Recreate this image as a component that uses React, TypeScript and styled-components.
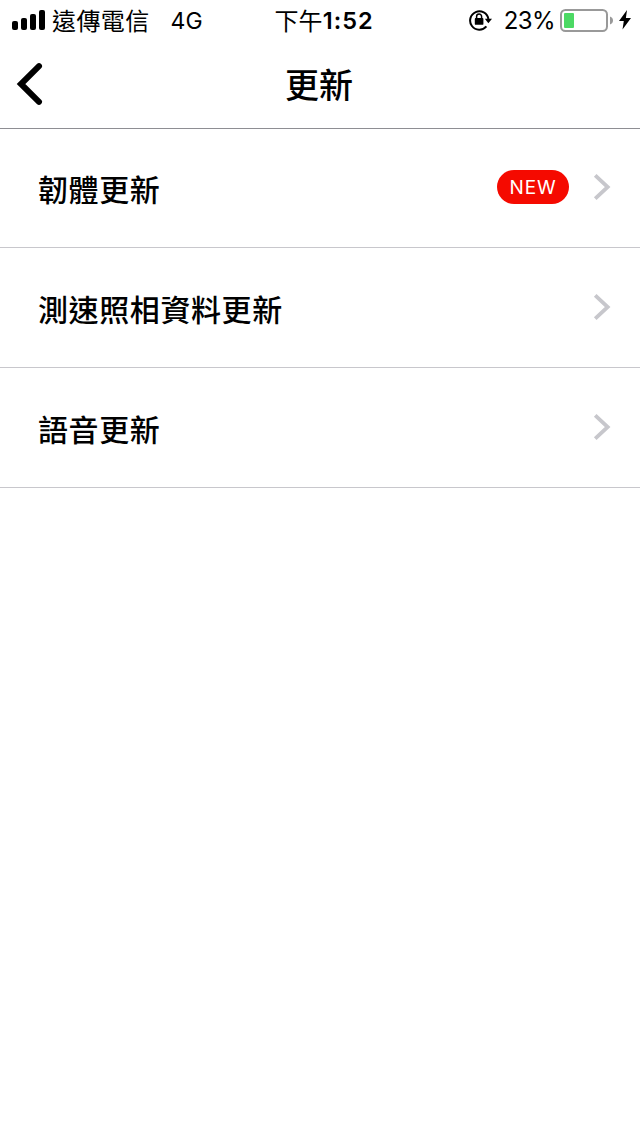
import React from "react";
import styled, { createGlobalStyle } from "styled-components";

const GlobalStyle = createGlobalStyle`
  * { box-sizing: border-box; }
  body {
    margin: 0;
    background: #fff;
    color: #000;
    font-family: Inter, "Noto Sans CJK TC", sans-serif;
  }
`;

const Screen = styled.main`
  min-height: 1136px;
  background: #fff;
`;

const StatusBar = styled.div`
  display: grid;
  grid-template: 40px / 1fr 100px 1fr;
  height: 40px;
  padding: 0 9px 0 12px;
  font-size: 24px;
  line-height: 38px;
  white-space: nowrap;
`;

const StatusGroup = styled.div<{ $end?: boolean }>`
  display: flex;
  align-items: center;
  justify-content: ${(p) => (p.$end ? "flex-end" : "flex-start")};
  svg { flex: none; }
`;

const Carrier = styled.span`
  margin-left: 6px;
  font-family: "Noto Sans CJK TC", sans-serif;
  font-weight: 400;
  letter-spacing: 0.4px;
`;

const Network = styled.span`
  margin-left: 21px;
  padding-top: 2px;
  font-size: 23px;
`;

const Clock = styled.div`
  display: flex;
  justify-content: center;
  padding: 1px 0 0 5px;
`;

const Period = styled.span`
  font-family: "Noto Sans CJK TC", sans-serif;
  font-weight: 400;
  letter-spacing: 0.2px;
`;

const Time = styled.span`
  padding-top: 1px;
  font-size: 23.5px;
  font-weight: 600;
  letter-spacing: 1px;
`;

const Percent = styled.span`
  margin: 0 5px 0 11px;
  padding-top: 2px;
  font-size: 24px;
  letter-spacing: -0.6px;
`;

const Header = styled.header`
  display: grid;
  grid-template-columns: 60px 1fr 62px;
  align-items: center;
  height: 89px;
  border-bottom: 1px solid #8e8e93;
`;

const BackButton = styled.button`
  display: flex;
  padding: 0 0 0 16px;
  border: 0;
  background: none;
`;

const Title = styled.h1`
  margin: 0;
  font: 500 34px/50px "Noto Sans CJK TC", sans-serif;
  text-align: center;
`;

const List = styled.ul`
  margin: 0;
  padding: 0;
  list-style: none;
`;

const Row = styled.li`
  display: flex;
  align-items: center;
  height: 120px;
  padding: 0 29px 2px 38px;
  border-bottom: 1px solid #c8c7cc;
  &:first-child { height: 119px; }
`;

const Label = styled.span`
  flex: 1;
  padding-top: 2px;
  font: 500 30px/44px "Noto Sans CJK TC", sans-serif;
  letter-spacing: 0.6px;
`;

const Badge = styled.span`
  width: 72px;
  height: 34px;
  margin-right: 24px;
  border-radius: 17px;
  background: #f50a00;
  color: #fff;
  font-size: 19px;
  font-weight: 400;
  line-height: 35px;
  letter-spacing: 0.8px;
  text-align: center;
`;

const SignalIcon = () => (
  <svg width="34" height="20" viewBox="0 0 34 20">
    <rect x="0" y="11" width="6" height="9" rx="2" />
    <rect x="9" y="8" width="6" height="12" rx="2" />
    <rect x="18" y="4" width="6" height="16" rx="2" />
    <rect x="27" y="0" width="6" height="20" rx="2" />
  </svg>
);

const LockIcon = () => (
  <svg width="24" height="22" viewBox="0 0 24 22">
    <path d="M17.400 17.400A9.200 9.200 0 1 1 19.400 10" fill="none" stroke="#000" strokeWidth="2" />
    <path d="M15.800 9.800h7.200l-3.600 4.400z" />
    <rect x="5.800" y="9" width="8.600" height="6.800" rx="0.900" />
    <path d="M7.600 9.500V7.600a2.500 2.500 0 0 1 5 0v1.900" fill="none" stroke="#000" strokeWidth="1.500" />
  </svg>
);

const BatteryIcon = () => (
  <svg width="54" height="24" viewBox="0 0 54 24">
    <rect x="1" y="2" width="46" height="21" rx="4.500" fill="none" stroke="#999" strokeWidth="2" />
    <rect x="4" y="5" width="10" height="15" rx="1" fill="#4cd964" />
    <path d="M50 8.500c4 1.300 4 6.700 0 8z" fill="#999" />
  </svg>
);

const BoltIcon = styled.svg`
  margin-left: 5px;
`;

const Chevron = () => (
  <svg width="18" height="28" viewBox="0 0 18 28">
    <path d="M2.200 2.300L14.700 14 2.200 25.700" fill="none" stroke="#c7c7cc" strokeWidth="3.800" />
  </svg>
);

const items = [
  { label: "韌體更新", isNew: true },
  { label: "測速照相資料更新", isNew: false },
  { label: "語音更新", isNew: false },
];

export default function App() {
  return (
    <Screen>
      <GlobalStyle />
      <StatusBar>
        <StatusGroup>
          <SignalIcon />
          <Carrier>遠傳電信</Carrier>
          <Network>4G</Network>
        </StatusGroup>
        <Clock>
          <Period>下午</Period>
          <Time>1:52</Time>
        </Clock>
        <StatusGroup $end>
          <LockIcon />
          <Percent>23%</Percent>
          <BatteryIcon />
          <BoltIcon width="12" height="20" viewBox="0 0 12 20">
            <path d="M8 0L0 11h4.800L3.500 19.500 12 8H6.900z" />
          </BoltIcon>
        </StatusGroup>
      </StatusBar>
      <Header>
        <BackButton aria-label="返回">
          <svg width="28" height="44" viewBox="0 0 28 44">
            <path d="M23 4.200L5 22 23 39.800" fill="none" stroke="#000" strokeWidth="6" strokeLinecap="round" />
          </svg>
        </BackButton>
        <Title>更新</Title>
      </Header>
      <List>
        {items.map((item) => (
          <Row key={item.label}>
            <Label>{item.label}</Label>
            {item.isNew && <Badge>NEW</Badge>}
            <Chevron />
          </Row>
        ))}
      </List>
    </Screen>
  );
}
